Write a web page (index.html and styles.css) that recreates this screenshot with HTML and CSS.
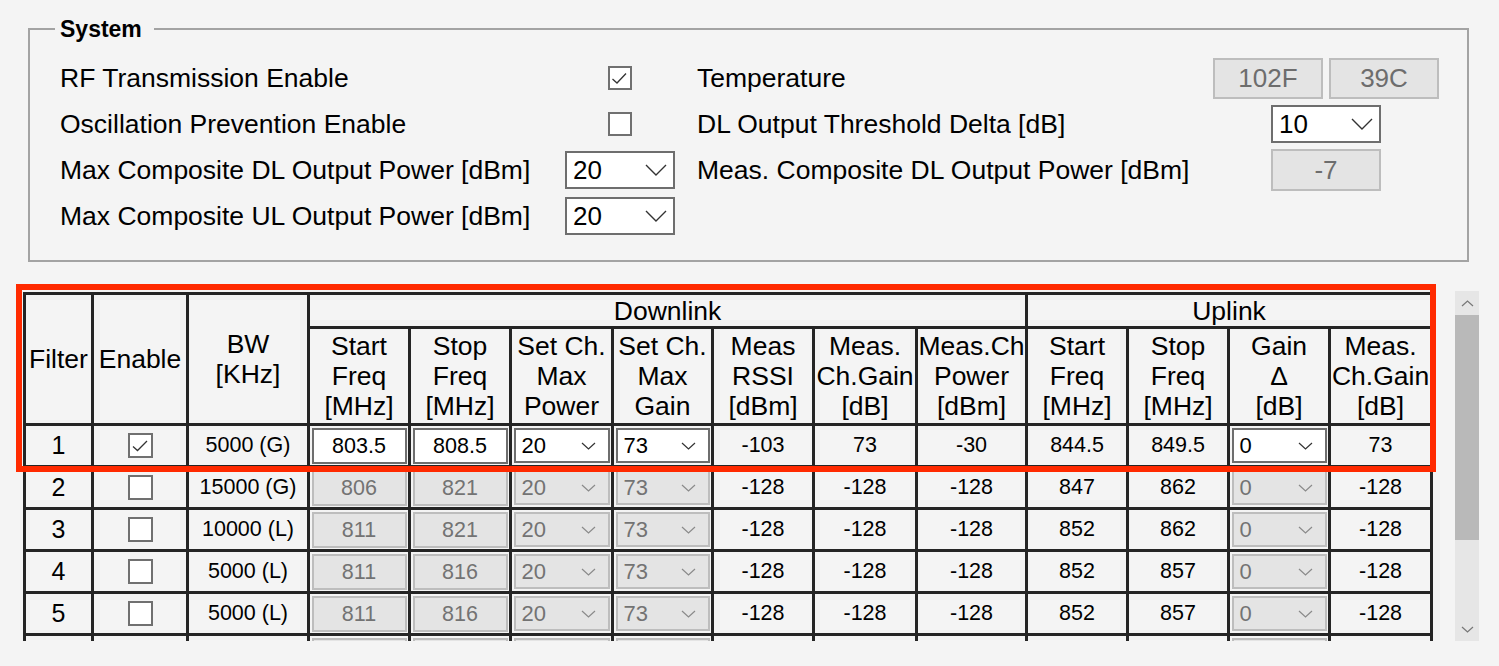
FILE: index.html
```html
<!DOCTYPE html>
<html lang="en">
<head>
    <meta charset="UTF-8">
    <title>System Filters</title>
    <link rel="stylesheet" href="styles.css">
</head>
<body>
    <div class="red-frame"></div>

    <fieldset class="system">
        <legend>System</legend>
        <div class="sys-cols">
            <div class="sys-left">
                <span class="lbl">RF Transmission Enable</span>
                <span class="ctl"><span class="chk"><svg viewBox="0 0 20 20"><path d="M2.5 11 L7 15 L16 5.5"/></svg></span></span>

                <span class="lbl">Oscillation Prevention Enable</span>
                <span class="ctl"><span class="chk"></span></span>

                <span class="lbl">Max Composite DL Output Power [dBm]</span>
                <span class="ctl"><span class="select">20<svg viewBox="0 0 22 12"><path d="M1 1 L11 11 L21 1"/></svg></span></span>

                <span class="lbl">Max Composite UL Output Power [dBm]</span>
                <span class="ctl"><span class="select">20<svg viewBox="0 0 22 12"><path d="M1 1 L11 11 L21 1"/></svg></span></span>
            </div>
            <div class="sys-right">
                <span class="lbl">Temperature</span>
                <span class="ctl"><span class="readout">102F</span><span class="readout">39C</span></span>

                <span class="lbl">DL Output Threshold Delta [dB]</span>
                <span class="ctl"><span class="select">10<svg viewBox="0 0 22 12"><path d="M1 1 L11 11 L21 1"/></svg></span></span>

                <span class="lbl">Meas. Composite DL Output Power [dBm]</span>
                <span class="ctl"><span class="readout tall">-7</span></span>
            </div>
        </div>
    </fieldset>

    <div class="grid-area">
        <div class="table-clip">
            <table class="filters">
                <colgroup>
                    <col style="width:68px"><col style="width:95px"><col style="width:121px">
                    <col style="width:101px"><col style="width:101px"><col style="width:102px"><col style="width:100px">
                    <col style="width:101px"><col style="width:103px"><col style="width:110px">
                    <col style="width:101px"><col style="width:101px"><col style="width:101px"><col style="width:102px">
                </colgroup>
                <thead>
                    <tr class="head1">
                        <th rowspan="2">Filter</th>
                        <th rowspan="2">Enable</th>
                        <th rowspan="2">BW<br>[KHz]</th>
                        <th colspan="7">Downlink</th>
                        <th colspan="4">Uplink</th>
                    </tr>
                    <tr class="head2">
                        <th>Start<br>Freq<br>[MHz]</th>
                        <th>Stop<br>Freq<br>[MHz]</th>
                        <th>Set Ch.<br>Max<br>Power</th>
                        <th>Set Ch.<br>Max<br>Gain</th>
                        <th>Meas<br>RSSI<br>[dBm]</th>
                        <th>Meas.<br>Ch.Gain<br>[dB]</th>
                        <th>Meas.Ch<br>Power<br>[dBm]</th>
                        <th>Start<br>Freq<br>[MHz]</th>
                        <th>Stop<br>Freq<br>[MHz]</th>
                        <th>Gain<br>&Delta;<br>[dB]</th>
                        <th>Meas.<br>Ch.Gain<br>[dB]</th>
                    </tr>
                </thead>
                <tbody>
                    <tr>
                        <td class="num">1</td>
                        <td><span class="chk sm"><svg viewBox="0 0 21 21"><path d="M3 11.5 L7.5 15.5 L17 6"/></svg></span></td>
                        <td>5000 (G)</td>
                        <td><span class="tin">803.5</span></td>
                        <td><span class="tin">808.5</span></td>
                        <td><span class="tdd">20<svg viewBox="0 0 15 8"><path d="M1 1 L7.5 7 L14 1"/></svg></span></td>
                        <td><span class="tdd">73<svg viewBox="0 0 15 8"><path d="M1 1 L7.5 7 L14 1"/></svg></span></td>
                        <td>-103</td>
                        <td>73</td>
                        <td>-30</td>
                        <td>844.5</td>
                        <td>849.5</td>
                        <td><span class="tdd">0<svg viewBox="0 0 15 8"><path d="M1 1 L7.5 7 L14 1"/></svg></span></td>
                        <td>73</td>
                    </tr>
                    <tr>
                        <td class="num">2</td>
                        <td><span class="chk sm"></span></td>
                        <td>15000 (G)</td>
                        <td><span class="tin off">806</span></td>
                        <td><span class="tin off">821</span></td>
                        <td><span class="tdd off">20<svg viewBox="0 0 15 8"><path d="M1 1 L7.5 7 L14 1"/></svg></span></td>
                        <td><span class="tdd off">73<svg viewBox="0 0 15 8"><path d="M1 1 L7.5 7 L14 1"/></svg></span></td>
                        <td>-128</td>
                        <td>-128</td>
                        <td>-128</td>
                        <td>847</td>
                        <td>862</td>
                        <td><span class="tdd off">0<svg viewBox="0 0 15 8"><path d="M1 1 L7.5 7 L14 1"/></svg></span></td>
                        <td>-128</td>
                    </tr>
                    <tr>
                        <td class="num">3</td>
                        <td><span class="chk sm"></span></td>
                        <td>10000 (L)</td>
                        <td><span class="tin off">811</span></td>
                        <td><span class="tin off">821</span></td>
                        <td><span class="tdd off">20<svg viewBox="0 0 15 8"><path d="M1 1 L7.5 7 L14 1"/></svg></span></td>
                        <td><span class="tdd off">73<svg viewBox="0 0 15 8"><path d="M1 1 L7.5 7 L14 1"/></svg></span></td>
                        <td>-128</td>
                        <td>-128</td>
                        <td>-128</td>
                        <td>852</td>
                        <td>862</td>
                        <td><span class="tdd off">0<svg viewBox="0 0 15 8"><path d="M1 1 L7.5 7 L14 1"/></svg></span></td>
                        <td>-128</td>
                    </tr>
                    <tr>
                        <td class="num">4</td>
                        <td><span class="chk sm"></span></td>
                        <td>5000 (L)</td>
                        <td><span class="tin off">811</span></td>
                        <td><span class="tin off">816</span></td>
                        <td><span class="tdd off">20<svg viewBox="0 0 15 8"><path d="M1 1 L7.5 7 L14 1"/></svg></span></td>
                        <td><span class="tdd off">73<svg viewBox="0 0 15 8"><path d="M1 1 L7.5 7 L14 1"/></svg></span></td>
                        <td>-128</td>
                        <td>-128</td>
                        <td>-128</td>
                        <td>852</td>
                        <td>857</td>
                        <td><span class="tdd off">0<svg viewBox="0 0 15 8"><path d="M1 1 L7.5 7 L14 1"/></svg></span></td>
                        <td>-128</td>
                    </tr>
                    <tr>
                        <td class="num">5</td>
                        <td><span class="chk sm"></span></td>
                        <td>5000 (L)</td>
                        <td><span class="tin off">811</span></td>
                        <td><span class="tin off">816</span></td>
                        <td><span class="tdd off">20<svg viewBox="0 0 15 8"><path d="M1 1 L7.5 7 L14 1"/></svg></span></td>
                        <td><span class="tdd off">73<svg viewBox="0 0 15 8"><path d="M1 1 L7.5 7 L14 1"/></svg></span></td>
                        <td>-128</td>
                        <td>-128</td>
                        <td>-128</td>
                        <td>852</td>
                        <td>857</td>
                        <td><span class="tdd off">0<svg viewBox="0 0 15 8"><path d="M1 1 L7.5 7 L14 1"/></svg></span></td>
                        <td>-128</td>
                    </tr>
                    <!-- next row is scrolled out of view, only its top edge shows -->
                    <tr>
                        <td></td>
                        <td></td>
                        <td></td>
                        <td><span class="tin off"></span></td>
                        <td><span class="tin off"></span></td>
                        <td><span class="tdd off"></span></td>
                        <td><span class="tdd off"></span></td>
                        <td></td>
                        <td></td>
                        <td></td>
                        <td></td>
                        <td></td>
                        <td><span class="tdd off"></span></td>
                        <td></td>
                    </tr>
                </tbody>
            </table>
        </div>
        <div class="scrollbar">
            <div class="sb-btn"><svg viewBox="0 0 13 7"><path d="M1 6 L6.5 1 L12 6"/></svg></div>
            <div class="sb-thumb"></div>
            <div class="sb-track"></div>
            <div class="sb-btn"><svg viewBox="0 0 13 7"><path d="M1 1 L6.5 6 L12 1"/></svg></div>
        </div>
    </div>
</body>
</html>
```

FILE: styles.css
```css
body {
    margin: 0;
    height: 666px;
    overflow: hidden;
    position: relative;
    background: #f4f4f4;
    color: #000;
    font-family: "Liberation Sans", Arial, sans-serif;
}

/* annotation box drawn over the first rows */
.red-frame {
    position: absolute;
    left: 16px;
    top: 284px;
    width: 1420px;
    height: 188px;
    box-sizing: border-box;
    border: 6px solid #ff2a00;
    z-index: 2;
    pointer-events: none;
}

.system {
    margin: 16px 0 0 28px;
    width: 1441px;
    box-sizing: border-box;
    border: 2px solid #a3a3a3;
    padding: 13px 28px 21px 30px;
    min-inline-size: 0;
}

.system legend {
    font-weight: bold;
    font-size: 23px;
    line-height: 26px;
    padding: 0 12px 0 5px;
    margin-left: -5px;
}

.sys-cols {
    display: flex;
    gap: 22px;
}

.sys-left {
    display: grid;
    grid-template-columns: 505px 110px;
    grid-auto-rows: 46px;
    align-items: center;
}

.sys-right {
    display: grid;
    grid-template-columns: 516px 226px;
    grid-auto-rows: 46px;
    align-items: center;
}

.lbl {
    font-size: 26.5px;
    white-space: nowrap;
}

.ctl {
    display: flex;
    justify-content: center;
    align-items: center;
    gap: 6px;
}

.chk {
    display: inline-flex;
    align-items: center;
    justify-content: center;
    width: 24px;
    height: 24px;
    box-sizing: border-box;
    border: 2px solid #707070;
    background: #fff;
}

.chk svg {
    width: 20px;
    height: 20px;
    fill: none;
    stroke: #333;
    stroke-width: 1.3;
}

.chk.sm {
    width: 25px;
    height: 25px;
    vertical-align: middle;
}

.chk.sm svg {
    width: 21px;
    height: 21px;
}

.select {
    display: flex;
    align-items: center;
    justify-content: space-between;
    width: 110px;
    height: 38px;
    box-sizing: border-box;
    border: 2px solid #6e6e6e;
    background: #fff;
    padding: 0 6px 0 6px;
    font-size: 26px;
}

.select svg {
    width: 22px;
    height: 12px;
    fill: none;
    stroke: #333;
    stroke-width: 1.4;
}

.readout {
    display: flex;
    align-items: center;
    justify-content: center;
    width: 110px;
    height: 41px;
    box-sizing: border-box;
    border: 2px solid #bdbdbd;
    background: #e4e4e4;
    color: #6d6d6d;
    font-size: 26px;
}

.readout.tall {
    height: 42px;
}

.grid-area {
    display: flex;
    margin-top: 29px;
    height: 350px;
}

.table-clip {
    margin-left: 23px;
    width: 1412px;
    height: 349px;
    padding-top: 1px;
    overflow: hidden;
}

.filters {
    border-collapse: collapse;
    table-layout: fixed;
    width: 1410px;
}

.filters th, .filters td {
    border: 3px solid #252525;
    padding: 0;
    text-align: center;
    font-weight: normal;
}

.filters th {
    font-size: 26.5px;
    line-height: 30px;
    white-space: nowrap;
}

.head1 {
    height: 34px;
}

.head2 th {
    padding: 2px 0;
}

.filters tbody tr {
    height: 42px;
}

.filters td {
    font-size: 21.5px;
}

.filters td.num {
    font-size: 25px;
}

.tin {
    display: block;
    box-sizing: border-box;
    width: calc(100% - 3px);
    height: 36px;
    margin: 0 auto;
    border: 2px solid #6e6e6e;
    background: #fff;
    line-height: 32px;
}

.tin.off, .tdd.off {
    background: #e4e4e4;
    border-color: #bdbdbd;
    color: #737373;
}

.tdd {
    display: flex;
    align-items: center;
    justify-content: space-between;
    box-sizing: border-box;
    width: calc(100% - 3px);
    height: 35px;
    margin: 0 auto;
    border: 2px solid #6e6e6e;
    background: #fff;
    padding: 0 12px 0 6px;
    font-size: 22px;
}

.tdd svg {
    width: 15px;
    height: 8px;
    fill: none;
    stroke: #333;
    stroke-width: 1.2;
}

.tdd.off svg {
    stroke: #8a8a8a;
}

.scrollbar {
    display: flex;
    flex-direction: column;
    margin-left: 20px;
    width: 24px;
    height: 350px;
    background: #e6e6e6;
}

.sb-btn {
    height: 24px;
    display: flex;
    align-items: center;
    justify-content: center;
}

.sb-btn svg {
    width: 13px;
    height: 7px;
    fill: none;
    stroke: #777;
    stroke-width: 1.2;
}

.sb-thumb {
    height: 225px;
    background: #b9b9b9;
}

.sb-track {
    flex: 1;
}
```
